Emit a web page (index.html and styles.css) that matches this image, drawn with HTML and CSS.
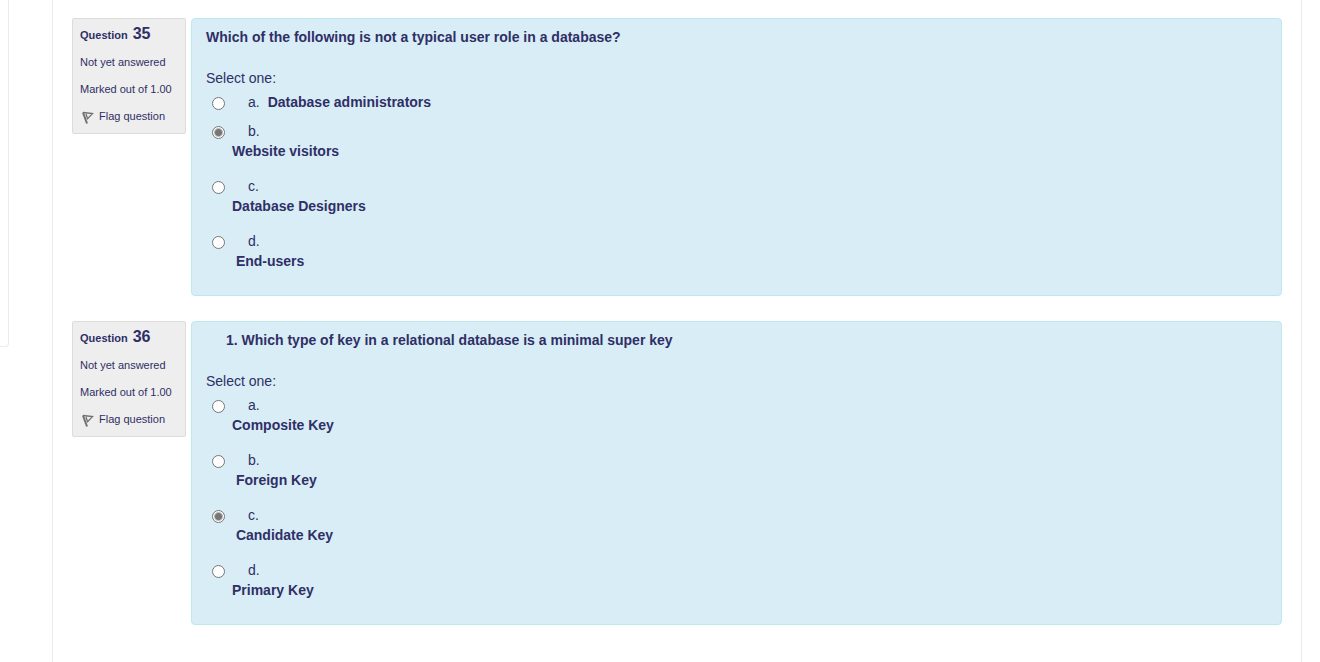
FILE: index.html
```html
<!DOCTYPE html>
<html lang="en">
<head>
<meta charset="utf-8">
<title>Quiz</title>
<link rel="stylesheet" href="styles.css">
</head>
<body>
<div class="page">
<aside class="side-card"></aside>
<main class="region">
  <section class="question">
    <div class="info">
      <h3 class="number">Question <span class="qno">35</span></h3>
      <div class="state">Not yet answered</div>
      <div class="grade">Marked out of 1.00</div>
      <a class="flag" href="#"><svg class="flag-icon" viewBox="0 0 12 13" aria-hidden="true"><path d="M1 1.5 5 12.5" stroke-width="2"/><path d="M1 1.5 10.5 2.6 5 8.2M4 3 5.4 7.2"/></svg><span>Flag question</span></a>
    </div>
    <div class="formulation">
      <p class="qtext">Which of the following is not a typical user role in a database?</p>
      <fieldset class="answers">
        <legend class="prompt">Select one:</legend>
        <div class="option option-inline"><input type="radio" name="q35" id="q35a"><label for="q35a"><span class="letter">a.</span><b class="answer">Database administrators</b></label></div>
        <div class="option"><input type="radio" name="q35" id="q35b" checked><label for="q35b"><span class="letter">b.</span><b class="answer">Website visitors</b></label></div>
        <div class="option"><input type="radio" name="q35" id="q35c"><label for="q35c"><span class="letter">c.</span><b class="answer">Database Designers</b></label></div>
        <div class="option"><input type="radio" name="q35" id="q35d"><label for="q35d"><span class="letter">d.</span><b class="answer">&nbsp;End-users</b></label></div>
      </fieldset>
    </div>
  </section>
  <section class="question">
    <div class="info">
      <h3 class="number">Question <span class="qno">36</span></h3>
      <div class="state">Not yet answered</div>
      <div class="grade">Marked out of 1.00</div>
      <a class="flag" href="#"><svg class="flag-icon" viewBox="0 0 12 13" aria-hidden="true"><path d="M1 1.5 5 12.5" stroke-width="2"/><path d="M1 1.5 10.5 2.6 5 8.2M4 3 5.4 7.2"/></svg><span>Flag question</span></a>
    </div>
    <div class="formulation">
      <p class="qtext qtext-indent">1. Which type of key in a relational database is a minimal super key</p>
      <fieldset class="answers">
        <legend class="prompt">Select one:</legend>
        <div class="option"><input type="radio" name="q36" id="q36a"><label for="q36a"><span class="letter">a.</span><b class="answer">Composite Key</b></label></div>
        <div class="option"><input type="radio" name="q36" id="q36b"><label for="q36b"><span class="letter">b.</span><b class="answer">&nbsp;Foreign Key</b></label></div>
        <div class="option"><input type="radio" name="q36" id="q36c" checked><label for="q36c"><span class="letter">c.</span><b class="answer">&nbsp;Candidate Key</b></label></div>
        <div class="option"><input type="radio" name="q36" id="q36d"><label for="q36d"><span class="letter">d.</span><b class="answer">Primary Key</b></label></div>
      </fieldset>
    </div>
  </section>
</main>
</div>
</body>
</html>
```

FILE: styles.css
```css
* {
  box-sizing: border-box;
}

body {
  margin: 0;
  background: #fff;
  color: #2f2f66;
  font: 14px/20px "Liberation Sans", Arial, sans-serif;
}

.page {
  display: flex;
  align-items: flex-start;
  gap: 43px;
  min-height: 100vh;
  padding-right: 18px;
}

.side-card {
  flex: 0 0 9px;
  height: 347px;
  border: solid #ebebeb;
  border-width: 0 1px 1px 0;
  border-radius: 0 0 4px 0;
}

.region {
  flex: 1;
  align-self: stretch;
  padding: 18px 19px 0;
  border: solid #ebebeb;
  border-width: 0 1px;
}

.question {
  display: flex;
  align-items: flex-start;
  gap: 5px;
  margin-bottom: 25px;
}

.info {
  display: flex;
  flex-direction: column;
  gap: 7px;
  flex: 0 0 114px;
  padding: 5px 7px 7px;
  border: 1px solid #dcdcdc;
  border-radius: 2px;
  background: #eee;
  font-size: 11px;
}

.number {
  display: flex;
  align-items: baseline;
  gap: 5px;
  margin: 0;
  font-size: 11px;
  font-weight: bold;
}

.qno {
  font-size: 16px;
}

.flag {
  display: flex;
  align-items: center;
  gap: 5px;
  padding-left: 2px;
  color: inherit;
  text-decoration: none;
}

.flag-icon {
  width: 12px;
  height: 13px;
  margin-top: 2px;
  fill: none;
  stroke: #707070;
  stroke-width: 1.3;
}

.formulation {
  flex: 1;
  padding: 8px 14px 24px;
  border: 1px solid #bce8f1;
  border-radius: 4px;
  background: #d9edf6;
}

.qtext {
  margin: 0 0 21px;
  font-weight: bold;
}

.qtext-indent {
  padding-left: 20px;
}

.answers {
  margin: 0;
  padding: 0;
  border: 0;
}

.prompt {
  margin-bottom: 4px;
  padding: 0;
}

.option {
  display: flex;
  align-items: flex-start;
  margin-bottom: 15px;
}

.option:last-child {
  margin-bottom: 0;
}

.option-inline {
  margin-bottom: 9px;
}

.option input {
  appearance: none;
  width: 13px;
  height: 13px;
  margin: 5px 7px 0 6px;
  border: 1px solid #767676;
  border-radius: 50%;
  background: #fff;
}

.option input:checked {
  background: radial-gradient(circle, #767676 3px, #fff 5px);
}

.letter {
  display: block;
  padding-left: 16px;
}

.answer {
  display: block;
}

.option-inline label {
  display: flex;
  gap: 8px;
}
```
